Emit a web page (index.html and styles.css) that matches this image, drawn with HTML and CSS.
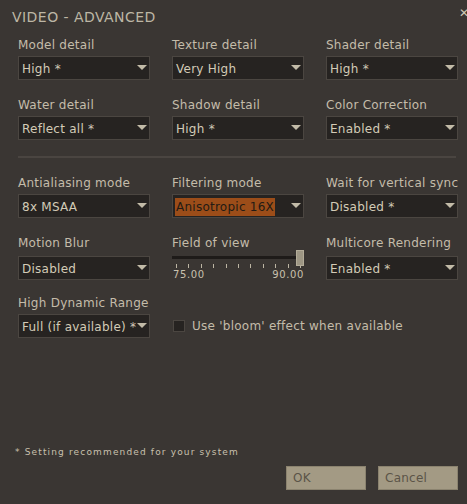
FILE: index.html
```html
<!DOCTYPE html>
<html>
<head>
<meta charset="utf-8">
<link rel="stylesheet" href="styles.css">
</head>
<body>
<div class="dialog">
  <div class="titlebar">
    <span class="title">VIDEO - ADVANCED</span>
    <span class="close">✕</span>
  </div>

  <div class="grid row1">
    <div class="field"><div class="label">Model detail</div><div class="select"><span>High *</span><i class="arrow"></i></div></div>
    <div class="field"><div class="label">Texture detail</div><div class="select"><span>Very High</span><i class="arrow"></i></div></div>
    <div class="field"><div class="label">Shader detail</div><div class="select"><span>High *</span><i class="arrow"></i></div></div>
  </div>

  <div class="grid row2">
    <div class="field"><div class="label">Water detail</div><div class="select"><span>Reflect all *</span><i class="arrow"></i></div></div>
    <div class="field"><div class="label">Shadow detail</div><div class="select"><span>High *</span><i class="arrow"></i></div></div>
    <div class="field"><div class="label">Color Correction</div><div class="select"><span>Enabled *</span><i class="arrow"></i></div></div>
  </div>

  <div class="sep"></div>

  <div class="grid row3">
    <div class="field"><div class="label">Antialiasing mode</div><div class="select"><span>8x MSAA</span><i class="arrow"></i></div></div>
    <div class="field"><div class="label">Filtering mode</div><div class="select"><span class="hl">Anisotropic 16X</span><i class="arrow"></i></div></div>
    <div class="field"><div class="label">Wait for vertical sync</div><div class="select"><span>Disabled *</span><i class="arrow"></i></div></div>
  </div>

  <div class="grid row4">
    <div class="field"><div class="label">Motion Blur</div><div class="select"><span>Disabled</span><i class="arrow"></i></div></div>
    <div class="field">
      <div class="label">Field of view</div>
      <div class="slider">
        <div class="track"><div class="thumb"></div></div>
        <div class="ticks">
          <i></i><i></i><i></i><i></i><i></i><i></i><i></i><i></i><i></i><i></i><i></i>
        </div>
        <div class="scale"><span>75.00</span><span>90.00</span></div>
      </div>
    </div>
    <div class="field"><div class="label">Multicore Rendering</div><div class="select"><span>Enabled *</span><i class="arrow"></i></div></div>
  </div>

  <div class="grid row5">
    <div class="field"><div class="label">High Dynamic Range</div><div class="select"><span>Full (if available) *</span><i class="arrow"></i></div></div>
    <div class="check"><span class="box"></span><span>Use 'bloom' effect when available</span></div>
  </div>

  <div class="footnote">* Setting recommended for your system</div>

  <div class="buttons">
    <div class="btn">OK</div>
    <div class="btn">Cancel</div>
  </div>
</div>
</body>
</html>
```

FILE: styles.css
```css
html, body {
  margin: 0;
  padding: 0;
  background: #3a3633;
}
body {
  width: 467px;
  height: 504px;
  overflow: hidden;
  font-family: "DejaVu Sans", Verdana, sans-serif;
  color: #c9c1ae;
}
.dialog {
  position: relative;
  display: flex;
  flex-direction: column;
  height: 504px;
}
.titlebar {
  display: flex;
  align-items: center;
  height: 18px;
  margin-top: 8px;
  padding-left: 12px;
}
.title {
  font-size: 14px;
  line-height: 18px;
  color: #bdb6a5;
  letter-spacing: 0.45px;
}
.close {
  position: absolute;
  top: 6px;
  left: 459px;
  font-size: 12px;
  font-weight: bold;
  color: #cfc8b6;
}
.grid {
  display: grid;
  grid-template-columns: repeat(3, 132px);
  column-gap: 22px;
  padding-left: 18px;
}
.label {
  font-size: 12px;
  line-height: 14px;
  height: 14px;
  margin-bottom: 4px;
  white-space: nowrap;
  letter-spacing: 0.25px;
  color: #c4bcaa;
}
.select {
  box-sizing: border-box;
  height: 24px;
  border: 1px solid #4b4641;
  background: #262321;
  display: flex;
  align-items: center;
  justify-content: space-between;
  padding: 0 2px 0 2px;
  font-size: 12px;
  letter-spacing: 0.25px;
  color: #d3cbb7;
  white-space: nowrap;
}
.select span {
  line-height: 16px;
  padding: 2px 1px 0;
}
.select .hl {
  background: #9c4d19;
  color: #231b14;
  padding: 1px 1px 1px;
  margin-top: 2px;
}
.arrow {
  width: 0;
  height: 0;
  border-left: 5px solid transparent;
  border-right: 5px solid transparent;
  border-top: 5px solid #c2bba8;
  margin-top: -2px;
}
.row1 { margin-top: 12px; }
.row2 { margin-top: 18px; }
.sep {
  margin: 16px 11px 0 18px;
  height: 2px;
  background: #4a4541;
}
.row3 { margin-top: 18px; }
.row4 { margin-top: 18px; }
.row4 .label { margin-bottom: 6px; }
.row5 { margin-top: 16px; }

.slider {
  position: relative;
}
.track {
  position: relative;
  margin-top: 2px;
  width: 128px;
  height: 3px;
  background: #1e1b19;
}
.thumb {
  position: absolute;
  left: 124px;
  top: -6px;
  width: 8px;
  height: 16px;
  box-sizing: border-box;
  background: #9d9684;
  border: 1px solid #b3ac99;
}
.ticks {
  display: flex;
  justify-content: space-between;
  padding: 0 3px 0 4px;
  margin-top: 5px;
  height: 4px;
}
.ticks i {
  width: 1px;
  height: 4px;
  background: #bcb5a3;
}
.scale {
  display: flex;
  justify-content: space-between;
  margin-top: 1px;
  padding-left: 1px;
  font-size: 10px;
  line-height: 11px;
  letter-spacing: 0.6px;
  color: #c9c1ae;
}
.check {
  grid-column: 2 / span 2;
  display: flex;
  align-items: center;
  align-self: end;
  height: 24px;
  margin-left: 1px;
  font-size: 12px;
  letter-spacing: 0.25px;
  color: #c4bcaa;
  white-space: nowrap;
}
.box {
  box-sizing: border-box;
  width: 12px;
  height: 12px;
  border: 1px solid #4b4641;
  background: #262321;
  margin-right: 7px;
}
.footnote {
  margin-top: 108px;
  padding-left: 15px;
  font-size: 9px;
  line-height: 12px;
  letter-spacing: 1.15px;
  color: #c9c1ae;
}
.buttons {
  display: flex;
  justify-content: flex-end;
  gap: 12px;
  margin-top: 8px;
  padding-right: 9px;
}
.btn {
  box-sizing: border-box;
  width: 80px;
  height: 24px;
  background: #a39a84;
  border: 1px solid #8b836f;
  color: #5b5448;
  font-size: 12px;
  line-height: 22px;
  padding-left: 6px;
  letter-spacing: 0.25px;
}
```
